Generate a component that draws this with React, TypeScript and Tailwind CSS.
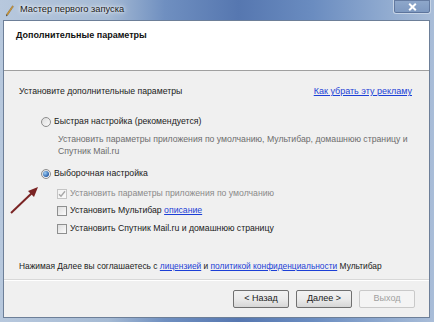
import React from "react";

const font = { fontFamily: '"Liberation Sans", Arial, sans-serif' };

function Radio({ checked }: { checked?: boolean }) {
  return (
    <span className="relative inline-flex h-[10px] w-[10px] shrink-0 items-center justify-center rounded-full border border-[#8d8d8d] bg-gradient-to-br from-[#dcdcdc] to-[#fbfbfb]">
      {checked && (
        <span className="h-[6px] w-[6px] rounded-full bg-[radial-gradient(circle_at_35%_35%,#9fd0f7,#2a5fa8_70%)]" />
      )}
    </span>
  );
}

function Check({ checked, disabled }: { checked?: boolean; disabled?: boolean }) {
  return (
    <span
      className={
        "relative inline-flex h-[10px] w-[10px] shrink-0 items-center justify-center border bg-gradient-to-br " +
        (disabled
          ? "border-[#c4c4c4] from-[#f2f2f2] to-[#fafafa]"
          : "border-[#8e8f8f] from-[#dedede] to-[#fbfbfb]")
      }
    >
      {checked && (
        <svg width="8" height="8" viewBox="0 0 8 8">
          <path d="M1 4.2 L3 6.3 L7 1.2" fill="none" stroke={disabled ? "#a8a8a8" : "#333"} strokeWidth="1.4" />
        </svg>
      )}
    </span>
  );
}

function Btn({ children, disabled }: { children: React.ReactNode; disabled?: boolean }) {
  return (
    <div
      className={
        "flex h-[18px] w-[56px] items-center justify-center rounded-[2px] border text-[9px] " +
        (disabled
          ? "border-[#c9c9c9] bg-[#f4f4f4] text-[#a0a0a0]"
          : "border-[#707070] bg-gradient-to-b from-[#f2f2f2] via-[#ebebeb] to-[#d6d6d6] text-[#1a1a1a]")
      }
    >
      {children}
    </div>
  );
}

export default function App() {
  return (
    <div
      className="flex h-[322px] w-[434px] flex-col overflow-hidden bg-[linear-gradient(90deg,#b7c8dd_0%,#a5bad4_25%,#6f8fc0_38%,#5677b0_55%,#6a8cc0_72%,#8ea9cf_88%,#a9bdd8_100%)]"
      style={font}
    >
      {/* Title bar */}
      <div className="relative flex h-[20px] shrink-0 items-center pl-[5px]">
        <svg width="9" height="12" viewBox="0 0 9 12" className="mt-[1px]">
          <path d="M7.5 0.8 L8.4 1.6 L2.6 10.2 L1.4 9.6 Z" fill="#e2a334" stroke="#7a5a20" strokeWidth="0.5" />
          <path d="M1.4 9.6 L2.6 10.2 L1 11.4 Z" fill="#333" />
        </svg>
        <span className="ml-[6px] text-[9.3px] text-[#1b1b1b] [text-shadow:0_0_6px_#ffffff,0_0_3px_#ffffff]">
          Мастер первого запуска
        </span>
        <div className="absolute right-[3px] top-0 flex h-[14px] w-[38px] items-center justify-center rounded-b-[3px] border border-t-0 border-[#c6d4e6] bg-[linear-gradient(#8fa8cb,#7d98c0)] shadow-[inset_0_0_0_1px_rgba(60,80,120,0.5)]">
          <svg width="9" height="8" viewBox="0 0 9 8">
            <path d="M1.2 0.8 L7.8 7.2 M7.8 0.8 L1.2 7.2" stroke="#ffffff" strokeWidth="2" />
          </svg>
        </div>
      </div>

      {/* Client */}
      <div className="ml-[3px] mr-[4px] flex h-[298px] flex-col border border-[#6d7f98] bg-[#f0f0f0]">
        {/* Header */}
        <div className="h-[50px] shrink-0 border-b border-[#a0a0a0] bg-white pl-[12px] pt-[8px]">
          <div className="text-[9px] font-bold leading-[12px] text-[#111]">Дополнительные параметры</div>
        </div>

        {/* Body */}
        <div className="flex flex-1 flex-col whitespace-nowrap pl-[15px] pr-[17px] text-[8.7px] text-[#1a1a1a]">
          <div className="mt-[14px] flex h-[13px] items-center justify-between leading-[13px]">
            <span>Установите дополнительные параметры</span>
            <span className="text-[9px] text-[#1c3fd6] underline">Как убрать эту рекламу</span>
          </div>

          <div className="ml-[22px] mt-[17px] flex h-[13px] items-center gap-[3px] leading-[13px]">
            <Radio />
            <span>Быстрая настройка (рекомендуется)</span>
          </div>
          <div className="ml-[39px] mt-[6px] leading-[11.5px] text-[#6d6d6d]">
            <div>Установить параметры приложения по умолчанию, Мультибар, домашнюю страницу и</div>
            <div>Спутник Mail.ru</div>
          </div>

          <div className="relative ml-[22px] mt-[10px] flex h-[13px] items-center gap-[3px] leading-[13px]">
            <Radio checked />
            <span>Выборочная настройка</span>
          </div>

          <div className="relative ml-[38px] mt-[7px] flex h-[13px] items-center gap-[3px] leading-[13px] text-[#8a8a8a]">
            <Check checked disabled />
            <span>Установить параметры приложения по умолчанию</span>
          </div>
          <div className="ml-[38px] mt-[4px] flex h-[13px] items-center gap-[3px] leading-[13px]">
            <Check />
            <span>
              Установить Мультибар <span className="text-[#1c3fd6] underline">описание</span>
            </span>
          </div>
          <div className="ml-[38px] mt-[5px] flex h-[13px] items-center gap-[3px] leading-[13px]">
            <Check />
            <span>Установить Спутник Mail.ru и домашнюю страницу</span>
          </div>

          <div className="mt-[25px] flex h-[13px] items-center leading-[13px] text-[8.4px]">
            <span>
              Нажимая Далее вы соглашаетесь с <span className="text-[#1c3fd6] underline">лицензией</span> и{" "}
              <span className="text-[#1c3fd6] underline">политикой конфиденциальности</span> Мультибар
            </span>
          </div>
        </div>

        {/* Footer */}
        <div className="flex h-[38px] shrink-0 items-start justify-end gap-[7px] border-t border-[#d8d8d8] pr-[14px] pt-[10px] shadow-[inset_0_1px_0_#ffffff]">
          <Btn>&lt; Назад</Btn>
          <Btn>Далее &gt;</Btn>
          <Btn disabled>Выход</Btn>
        </div>
      </div>

      {/* Arrow overlay */}
      <svg className="pointer-events-none absolute left-0 top-0" width="434" height="322">
        <line x1="11" y1="213" x2="33" y2="192" stroke="#7a2424" strokeWidth="2" />
        <polygon points="38,187 28,191 34,197" fill="#7a2424" />
      </svg>
    </div>
  );
}
